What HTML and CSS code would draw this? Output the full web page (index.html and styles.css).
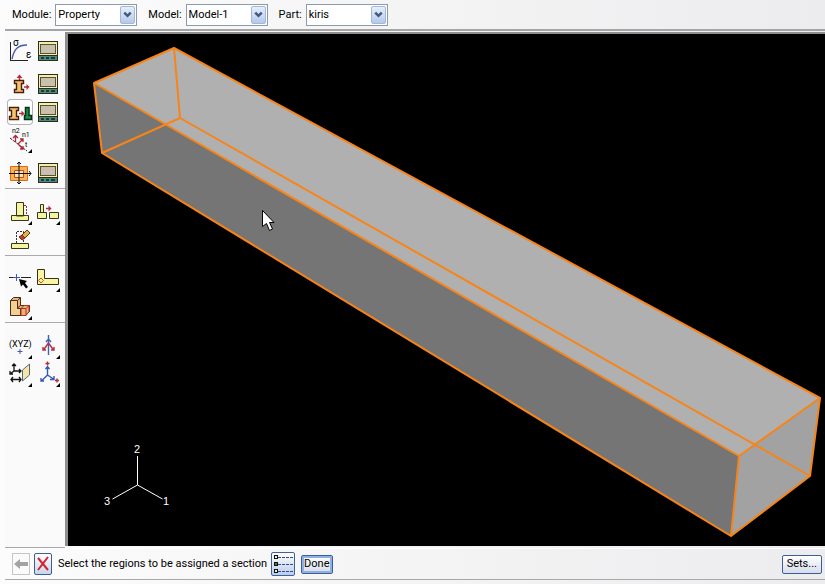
FILE: index.html
```html
<!DOCTYPE html>
<html lang="en">
<head>
<meta charset="utf-8">
<title>Property module</title>
<link rel="stylesheet" href="styles.css">
</head>
<body>
<svg class="defs" aria-hidden="true">
  <defs>
    <g id="manager" shape-rendering="crispEdges">
      <rect x="3" y="3" width="20" height="20" fill="#2c2c1c"/>
      <rect x="4" y="4" width="18" height="13" fill="#f6f0a6"/>
      <rect x="5" y="6" width="16" height="10" fill="#55523a"/>
      <rect x="6" y="7" width="14" height="8" fill="#c9c0ae"/>
      <rect x="4" y="18" width="18" height="4" fill="#4f8a7c"/>
      <path d="M6 20h3M11 20h3M16 20h4" stroke="#173d38" stroke-width="2"/>
    </g>
    <path id="more" d="M25 22v4h-4z" fill="#000"/>
    <path id="beam" d="M.5 .5h9v3h-2v6h2v3h-9v-3h2v-6h-2z" fill="#f5c56c" stroke="#4a1c0c" stroke-width="1.400"/>
    <g id="right"><path d="M0 0h4" stroke="#b82c38" stroke-width="1.500"/><path d="M2.500-3l3 3l-3 3z" fill="#b82c38"/></g>
    <path id="chevron" d="M4 6l4 4l4-4" fill="none" stroke="#42587f" stroke-width="3"/>
  </defs>
</svg>

<header class="context-bar">
  <div class="field">
    <label for="module">Module:</label>
    <span class="combo"><select id="module"><option>Property</option></select><svg class="drop" viewBox="0 0 16 18"><use href="#chevron"/></svg></span>
  </div>
  <div class="field">
    <label for="model">Model:</label>
    <span class="combo"><select id="model"><option>Model-1</option></select><svg class="drop" viewBox="0 0 16 18"><use href="#chevron"/></svg></span>
  </div>
  <div class="field">
    <label for="part">Part:</label>
    <span class="combo"><select id="part"><option>kiris</option></select><svg class="drop" viewBox="0 0 16 18"><use href="#chevron"/></svg></span>
  </div>
</header>

<main class="workspace">
  <nav class="toolbox" aria-label="Toolbox">
    <section class="group">
      <div class="tools">
        <button class="tool" aria-label="Create material"><svg viewBox="0 0 26 26"><path d="M3.500 4v19M3 22.500h18" stroke="#222" fill="none"/><path d="M5 21C7 11 11 7 20 7" stroke="#4a55ae" fill="none" stroke-width="1.400"/><text x="6" y="8" class="glyph">σ</text><text x="19" y="20" class="glyph">ε</text></svg></button>
        <button class="tool" aria-label="Material manager"><svg viewBox="0 0 26 26"><use href="#manager"/></svg></button>
      </div>
      <div class="tools">
        <button class="tool" aria-label="Create section"><svg viewBox="0 0 26 26"><use href="#beam" x="7" y="9"/><use href="#right" x="17" y="16"/><path d="M12.500 9V5" stroke="#b82c38" stroke-width="1.500"/><path d="M9.500 7l3-3.500l3 3.500z" fill="#b82c38"/></svg></button>
        <button class="tool" aria-label="Section manager"><svg viewBox="0 0 26 26"><use href="#manager"/></svg></button>
        <button class="tool active" aria-label="Assign section"><svg viewBox="0 0 26 26"><use href="#beam" x="2" y="8"/><use href="#right" x="12" y="14.500"/><path d="M18.500 8.500h3.500v8h2.500v4h-7v-4h1z" fill="#159447" stroke="#0b2c17" stroke-width="1.500"/></svg></button>
        <button class="tool" aria-label="Section assignment manager"><svg viewBox="0 0 26 26"><use href="#manager"/></svg></button>
        <button class="tool" aria-label="Assign beam orientation"><svg viewBox="0 0 26 26"><path d="M3 11l17 13" stroke="#222" stroke-dasharray="3 1"/><path d="M8.500 15V9M6 11l2.500-2.500l2.500 2.500M11 17l5-5M13 12h3v3M11 17l5 5M16 19v3h-3" stroke="#b0263a" fill="none" stroke-width="1.300"/><text x="5" y="6" class="tiny">n2</text><text x="15" y="10" class="tiny">n1</text><text x="18" y="20" class="tiny">t</text><use href="#more"/></svg></button>
      </div>
      <div class="tools">
        <button class="tool" aria-label="Create skin"><svg viewBox="0 0 26 26"><path d="M3.500 6.500h17v14h-17z" fill="#f8b450" stroke="#d86b21"/><path d="M7.500 10.500h9v7h-9z" fill="#fbe3c3" stroke="#c24e20"/><path d="M12 2v22M2 13.500h22M10 4l2-2l2 2M10 22l2 2l2-2M22 11l2 2.500l-2 2.500" stroke="#111" fill="none"/></svg></button>
        <button class="tool" aria-label="Skin manager"><svg viewBox="0 0 26 26"><use href="#manager"/></svg></button>
      </div>
    </section>

    <section class="group">
      <div class="tools">
        <button class="tool" aria-label="Create feature"><svg viewBox="0 0 26 26"><path d="M9.500 3.500h7V17h-7zM4.500 16.500h17v5h-17z" fill="#f7f4a0" stroke="#37371d"/><path d="M17 6.500h2.500V17" stroke="#a82c2c" fill="none" stroke-dasharray="2 1"/><use href="#more"/></svg></button>
        <button class="tool" aria-label="Move feature"><svg viewBox="0 0 26 26"><path d="M5.500 5.500h3v8h-3zM2.500 13.500h9v6h-9zM14.500 13.500h9v6h-9z" fill="#f7f4a0" stroke="#37371d"/><use href="#right" x="11" y="9.500"/><use href="#more"/></svg></button>
        <button class="tool" aria-label="Edit feature"><svg viewBox="0 0 26 26"><path d="M9.500 16V4.500h7V16" fill="none" stroke="#333" stroke-dasharray="2 1"/><path d="M4.500 16.500h17v5h-17z" fill="#f7f4a0" stroke="#37371d"/><path d="M15 8l5-5l3 3l-5 5z" fill="#e4b04b" stroke="#5f3b15"/><path d="M12 10l3-2l3 3l-3 2z" fill="#c53a22" stroke="#8c2418"/></svg></button>
      </div>
    </section>

    <section class="group">
      <div class="tools">
        <button class="tool" aria-label="Partition edge"><svg viewBox="0 0 26 26"><path d="M2 11.500h4M14 11.500h10" stroke="#222"/><path d="M6 11.500h7M9.500 8v7" stroke="#3c59c5"/><path d="M12 13l8 2l-2 2l3 4l-2 1.500l-3-4l-2 2z" fill="#000"/><use href="#more"/></svg></button>
        <button class="tool" aria-label="Partition face"><svg viewBox="0 0 26 26"><path d="M2.500 3.500h7v9h14v6h-21z" fill="#f9f5a2" stroke="#33331c"/><path d="M6 12l2.500 2.500L6 17l-2.500-2.500z" fill="none" stroke="#bf5420"/><use href="#more"/></svg></button>
        <button class="tool" aria-label="Partition cell"><svg viewBox="0 0 26 26"><path d="M3.500 6.500l3-3h7v8h9v6l-4 4h-15z" fill="#e5b777" stroke="#4a2d18"/><path d="M3.500 6.500h7v8h3v7h-10z" fill="#f2cf92" stroke="#4a2d18"/><path d="M10.500 6.500l3-3M10.500 14l3-2.500" stroke="#4a2d18"/><path d="M14 14.500h5v7h-5zM14 14.500l3-3h5v6l-3 4M19 14.500l3-3" fill="none" stroke="#b92d24"/><use href="#more"/></svg></button>
      </div>
    </section>

    <section class="group">
      <div class="tools">
        <button class="tool" aria-label="Create datum point"><svg viewBox="0 0 26 26"><text x="2" y="14" class="xyz">(XYZ)</text><path d="M10.500 18.500h5M13 16v5" stroke="#3c59c5"/><use href="#more"/></svg></button>
        <button class="tool" aria-label="Create datum axis"><svg viewBox="0 0 26 26"><path d="M13.500 2v20M11 9l2.500-3l2.500 3" stroke="#3963b5" fill="none" stroke-width="1.400"/><path d="M13.500 10l-5 7M13.500 10l5 7M8 14v3h3M16 17h3v-3" stroke="#b33145" fill="none" stroke-width="1.400"/><use href="#more"/></svg></button>
        <button class="tool" aria-label="Create datum plane"><svg viewBox="0 0 26 26"><path d="M7 10V3M5 5l2-2l2 2M7 10h7M12 8l2 2l-2 2M7 10l-4 3M3 10v3h3M4 18.500h10M6 16l-2 2.500l2 2.500M12 16l2 2.500l-2 2.500" fill="none" stroke="#111" stroke-width="1.300"/><path d="M15.500 9l7-6v11l-7 6z" fill="#f6e5a0" stroke="#54688c"/><use href="#more"/></svg></button>
        <button class="tool" aria-label="Create coordinate system"><svg viewBox="0 0 26 26"><path d="M12.500 14V6M10.500 8l2-2.500l2 2.500M12.500 14l-6 6M6 17v3h3M12.500 14l6 4M15 18.500h4V15" fill="none" stroke="#3658b5" stroke-width="1.400"/><path d="M10.500 2.500h4M12.500 .5v4M20 19.500h4M22 17.500v4" stroke="#b52d35" stroke-width="1.400"/><use href="#more"/></svg></button>
      </div>
    </section>
  </nav>

  <section class="viewport" aria-label="Viewport">
    <svg viewBox="68 34 757 512" preserveAspectRatio="xMinYMin meet">
      <path d="M94 83L174 48L820 398L739 456z" fill="#b0b0b0"/>
      <path d="M94 83L739 456L731 536L102 153z" fill="#757575"/>
      <path d="M739 456L820 398L810 476L731 536z" fill="#a2a2a2"/>
      <g fill="none" stroke="#f88418" stroke-width="2" stroke-linejoin="round">
        <path d="M94 83L174 48L820 398L739 456zM94 83L102 153L731 536L739 456M731 536L810 476L820 398"/>
        <path d="M174 48L180 118L102 153M180 118L810 476"/>
      </g>
      <path d="M137.500 456v29l25 14M137.500 485l-25 14" fill="none" stroke="#fff"/>
      <g class="axis"><text x="134" y="453">2</text><text x="104" y="505">3</text><text x="163" y="505">1</text></g>
      <path d="M262.500 210.500v16l4-3l3 7l3-1.500l-3-6.500h4.500z" fill="#fff" stroke="#000"/>
    </svg>
  </section>
</main>

<footer class="prompt">
  <button class="step" aria-label="Back" disabled><svg viewBox="0 0 16 20"><path d="M1 10l6-5v3h8v4H7v3z" fill="#a3a3a3"/></svg></button>
  <button class="step cancel" aria-label="Cancel"><svg viewBox="0 0 16 20"><path d="M3 4l10 12M13 3L3 16" stroke="#d8202e" stroke-width="2" fill="none"/></svg></button>
  <p class="message">Select the regions to be assigned a section</p>
  <button class="list" aria-label="Options"><svg viewBox="0 0 22 22" shape-rendering="crispEdges"><path d="M6 4.500h15M6 11.500h15M6 18.500h15" stroke="#3a4a80" stroke-dasharray="3 1"/><path d="M2.500 2.500h3v3h-3zM2.500 16.500h3v3h-3z" fill="#e9f2c8" stroke="#111"/><path d="M2.500 9.500h3v3h-3z" fill="#4f7050" stroke="#111"/></svg></button>
  <button class="push default">Done</button>
  <button class="push sets">Sets...</button>
</footer>
</body>
</html>
```
FILE: styles.css
```css
* {
  box-sizing: border-box;
}

body {
  margin: 0;
  min-height: 100vh;
  display: flex;
  flex-direction: column;
  padding: 0 0 4px 5px;
  background: linear-gradient(to right, #fcfcfc, #ececee);
  color: #000;
  font: 11px/14px Roboto, Tahoma, "DejaVu Sans", sans-serif;
}

button,
select {
  font: inherit;
  color: inherit;
  margin: 0;
}

svg {
  display: block;
}

.defs {
  position: absolute;
  width: 0;
  height: 0;
}

.context-bar {
  display: flex;
  align-items: center;
  gap: 11px;
  height: 31px;
  padding-left: 7px;
  border-bottom: 2px solid #a5a5a5;
}

.field {
  display: flex;
  align-items: center;
  gap: 4px;
}

.combo {
  position: relative;
  width: 82px;
}

.combo select {
  display: block;
  width: 100%;
  height: 22px;
  padding: 0 20px 0 2px;
  appearance: none;
  border: 1px solid #8c9bab;
  border-radius: 0;
  background: #fff;
}

.drop {
  position: absolute;
  top: 2px;
  right: 2px;
  width: 15px;
  height: 18px;
  border: 1px solid #a3b8d8;
  border-radius: 2px;
  background: linear-gradient(#e6effb, #b3c9ea);
  pointer-events: none;
}

.workspace {
  flex: 1;
  display: flex;
}

.toolbox {
  width: 60px;
  border-bottom: 1px solid #a8a8a8;
  background: #fafafb;
}

.group {
  display: flex;
  flex-direction: column;
  gap: 7px;
  padding: 10px 2px 2px;
}

.group:first-child {
  padding-top: 7px;
}

.group + .group {
  border-top: 1px solid #ababab;
}

.tools {
  display: grid;
  grid-template-columns: 26px 26px;
  gap: 2px;
}

.tool {
  height: 26px;
  padding: 0;
  border: 0;
  background: none;
}

.tool svg {
  width: 26px;
  height: 26px;
  overflow: visible;
}

.tool.active {
  border-radius: 4px;
  background: #fff;
  box-shadow: inset 0 0 0 1px #b2b2b8;
}

.glyph {
  font-size: 10px;
}

.tiny {
  font-size: 7px;
}

.xyz {
  font-size: 9px;
}

.viewport {
  flex: 1;
  min-width: 0;
  border: solid #8e8e8e;
  border-width: 2px 0 0 3px;
  margin: 1px 0 2px;
  background: #000;
}

.viewport svg {
  width: 100%;
}

.axis {
  fill: #fff;
  font: 11px "Liberation Sans", sans-serif;
}

.prompt {
  display: flex;
  align-items: center;
  height: 32px;
  padding: 0 3px 0 7px;
  border-top: 1px solid #fff;
  border-bottom: 1px solid #a8a8a8;
}

.message {
  margin: 0 4px 0 6px;
}

.step {
  width: 18px;
  height: 22px;
  padding: 0;
  margin-right: 4px;
  border: 1px solid #c6c6c6;
  background: #fbfbfb;
}

.step svg {
  width: 16px;
  height: 20px;
}

.step.cancel {
  margin-right: 0;
  border-color: #3f5d92;
  border-radius: 2px;
  background: linear-gradient(#fff, #c7d6ea);
}

.list {
  width: 24px;
  height: 24px;
  margin-right: 6px;
  padding: 0;
  border: 1px solid #40609c;
  border-radius: 2px;
  background: linear-gradient(#fff, #b9cdec);
}

.list svg {
  width: 22px;
  height: 22px;
}

.push {
  height: 19px;
  padding: 0 2px;
  border: 1px solid #3f5d92;
  border-radius: 2px;
  background: linear-gradient(#fff, #d5dcea);
  line-height: 16px;
}

.push.default {
  box-shadow: inset 0 0 0 2px #8fb0e6;
}

.push.sets {
  margin-left: auto;
  padding: 0 4px;
}
```
